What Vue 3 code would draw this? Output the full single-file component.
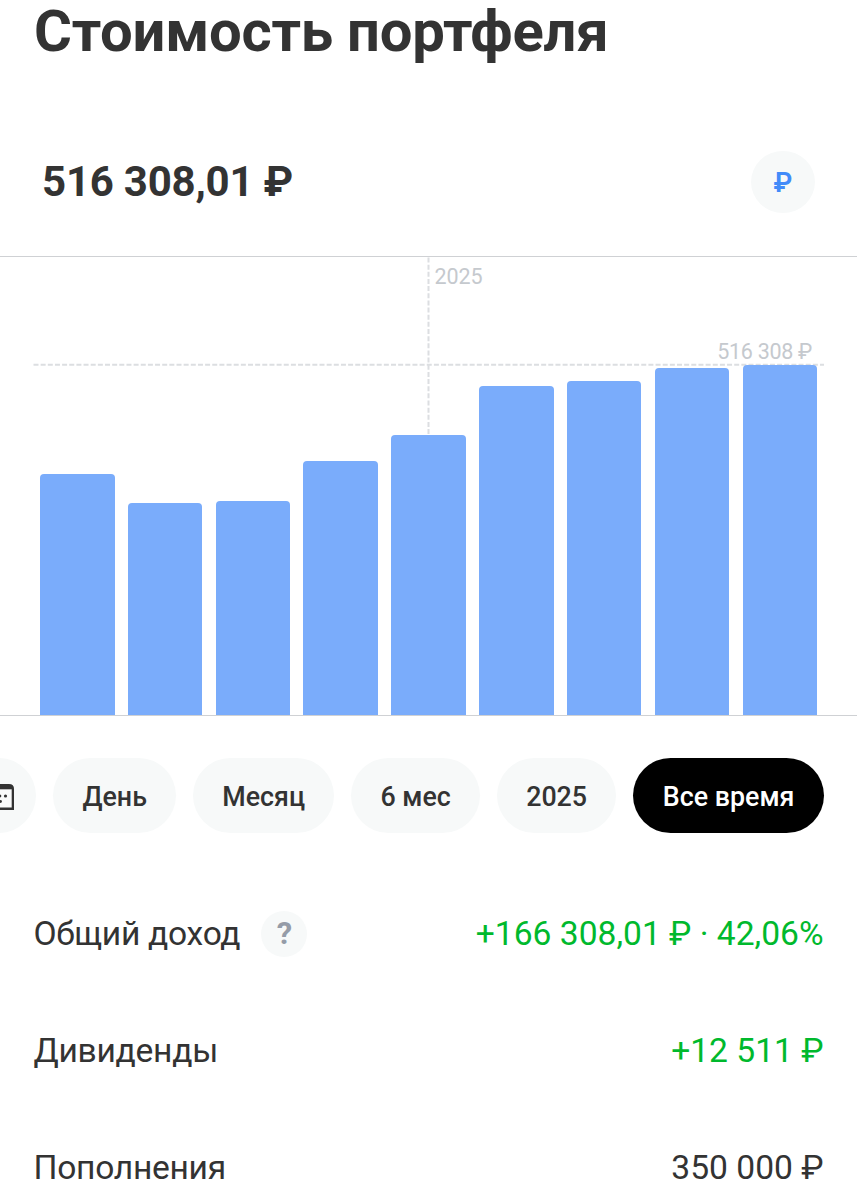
<template>
  <main class="portfolio">
    <h1 class="title">Стоимость портфеля</h1>

    <div class="summary">
      <div class="amount">516 308,01 ₽</div>
      <button class="currency-btn" type="button">₽</button>
    </div>

    <section class="chart">
      <svg class="grid" viewBox="0 0 857 458" width="857" height="458">
        <line x1="428.5" y1="0.5" x2="428.5" y2="178" />
        <line x1="33.5" y1="107.7" x2="824" y2="107.7" />
      </svg>
      <span class="year-label">2025</span>
      <span class="max-label">516 308 ₽</span>
      <div class="bars">
        <div v-for="(h, i) in bars" :key="i" class="bar" :style="{ height: h + 'px' }"></div>
      </div>
    </section>

    <nav class="periods">
      <button class="period period-calendar" type="button">
        <svg width="30" height="28" viewBox="0 0 30 28">
          <path d="M6 1h18q5 0 5 5v21H1V6q0-5 5-5z" fill="#333" />
          <path d="M3.3 6.3h23.4v18.2H3.3z" fill="#f9fafa" />
          <g fill="#333">
            <circle cx="9" cy="13" r="1.5" />
            <circle cx="14.8" cy="13" r="1.5" />
            <circle cx="20.5" cy="13" r="1.6" />
            <circle cx="9" cy="18.5" r="1.4" />
            <circle cx="15.5" cy="18.5" r="1.4" />
          </g>
        </svg>
      </button>
      <button
        v-for="p in periods"
        :key="p"
        type="button"
        class="period"
        :class="{ active: p === current }"
        @click="current = p"
      >{{ p }}</button>
    </nav>

    <section class="stats">
      <div v-for="s in stats" :key="s.label" class="stat">
        <span class="stat-label">{{ s.label }}</span>
        <span v-if="s.hint" class="hint">?</span>
        <span class="stat-value" :class="{ positive: s.positive }">{{ s.value }}</span>
      </div>
    </section>
  </main>
</template>

<script setup>
import { ref } from 'vue'

const bars = [241, 212, 214, 254.5, 280, 329, 334.5, 347.5, 350]

const periods = ['День', 'Месяц', '6 мес', '2025', 'Все время']
const current = ref('Все время')

const stats = [
  { label: 'Общий доход', value: '+166 308,01 ₽ · 42,06%', positive: true, hint: true },
  { label: 'Дивиденды', value: '+12 511 ₽', positive: true },
  { label: 'Пополнения', value: '350 000 ₽' }
]
</script>

<style>
body {
  margin: 0;
  background: #fff;
  overflow: hidden;
}
</style>

<style scoped>
.portfolio {
  width: 857px;
  height: 1200px;
  overflow: hidden;
  background: #fff;
  color: #333;
  font-family: Roboto, 'Noto Sans', sans-serif;
}

button {
  border: none;
  padding: 0;
  font-family: inherit;
  color: inherit;
  cursor: pointer;
}

.title {
  margin: 0;
  padding: 0 34px;
  height: 64px;
  line-height: 62px;
  font-size: 58px;
  font-weight: 700;
  letter-spacing: -0.25px;
  white-space: nowrap;
}

.summary {
  display: flex;
  align-items: center;
  justify-content: space-between;
  height: 62px;
  padding: 87px 42px 43px;
}

.amount {
  padding-bottom: 2px;
  font-size: 42px;
  font-weight: 700;
  letter-spacing: -0.22px;
}

.currency-btn {
  width: 64px;
  height: 62px;
  padding-top: 2px;
  border-radius: 50%;
  background: #f7f9f9;
  color: #428bf9;
  font-size: 27px;
  font-weight: 600;
}

/* график стоимости */
.chart {
  position: relative;
  height: 458px;
  border-top: 1px solid #cfd1d4;
  border-bottom: 1px solid #cfd1d4;
}

.grid {
  position: absolute;
  top: 0;
  left: 0;
}

.grid line {
  stroke: #dcdee1;
  stroke-width: 2;
  stroke-dasharray: 5 2.15;
}

.year-label,
.max-label {
  position: absolute;
  color: #c5c9ce;
  font-size: 21.5px;
  line-height: 24px;
}

.year-label {
  top: 8px;
  left: 434.5px;
  letter-spacing: -0.1px;
}

.max-label {
  top: 83px;
  right: 45px;
  letter-spacing: -0.3px;
}

.bars {
  position: relative;
  display: flex;
  align-items: flex-end;
  justify-content: space-between;
  height: 100%;
  padding: 0 40px;
}

.bar {
  width: 74.5px;
  border-radius: 4px 4px 0 0;
  background: #7aacfb;
}

/* выбор периода */
.periods {
  display: flex;
  justify-content: flex-end;
  gap: 17px;
  padding: 42px 33px 0;
}

.period {
  flex-shrink: 0;
  height: 75px;
  padding: 2px 29.2px 0;
  border-radius: 38px;
  background: #f7f9f9;
  font-size: 26.8px;
  font-weight: 500;
}

.period-calendar {
  display: flex;
  align-items: center;
  justify-content: center;
  width: 75px;
  padding: 2px 0 0 2px;
}

.active {
  padding: 2px 29.6px 0;
  background: #000;
  color: #fff;
}

.stats {
  padding: 42px 33.5px 0;
}

.stat {
  display: flex;
  align-items: center;
  height: 117px;
  font-size: 33.6px;
}

.stat-label {
  letter-spacing: -0.28px;
}

.hint {
  width: 46px;
  height: 46px;
  margin-left: 21px;
  border-radius: 50%;
  background: #f7f9f9;
  color: #959ca8;
  font-size: 31px;
  font-weight: 700;
  line-height: 46px;
  text-align: center;
}

.stat-value {
  margin-left: auto;
}

.positive {
  color: #00b92d;
}
</style>
